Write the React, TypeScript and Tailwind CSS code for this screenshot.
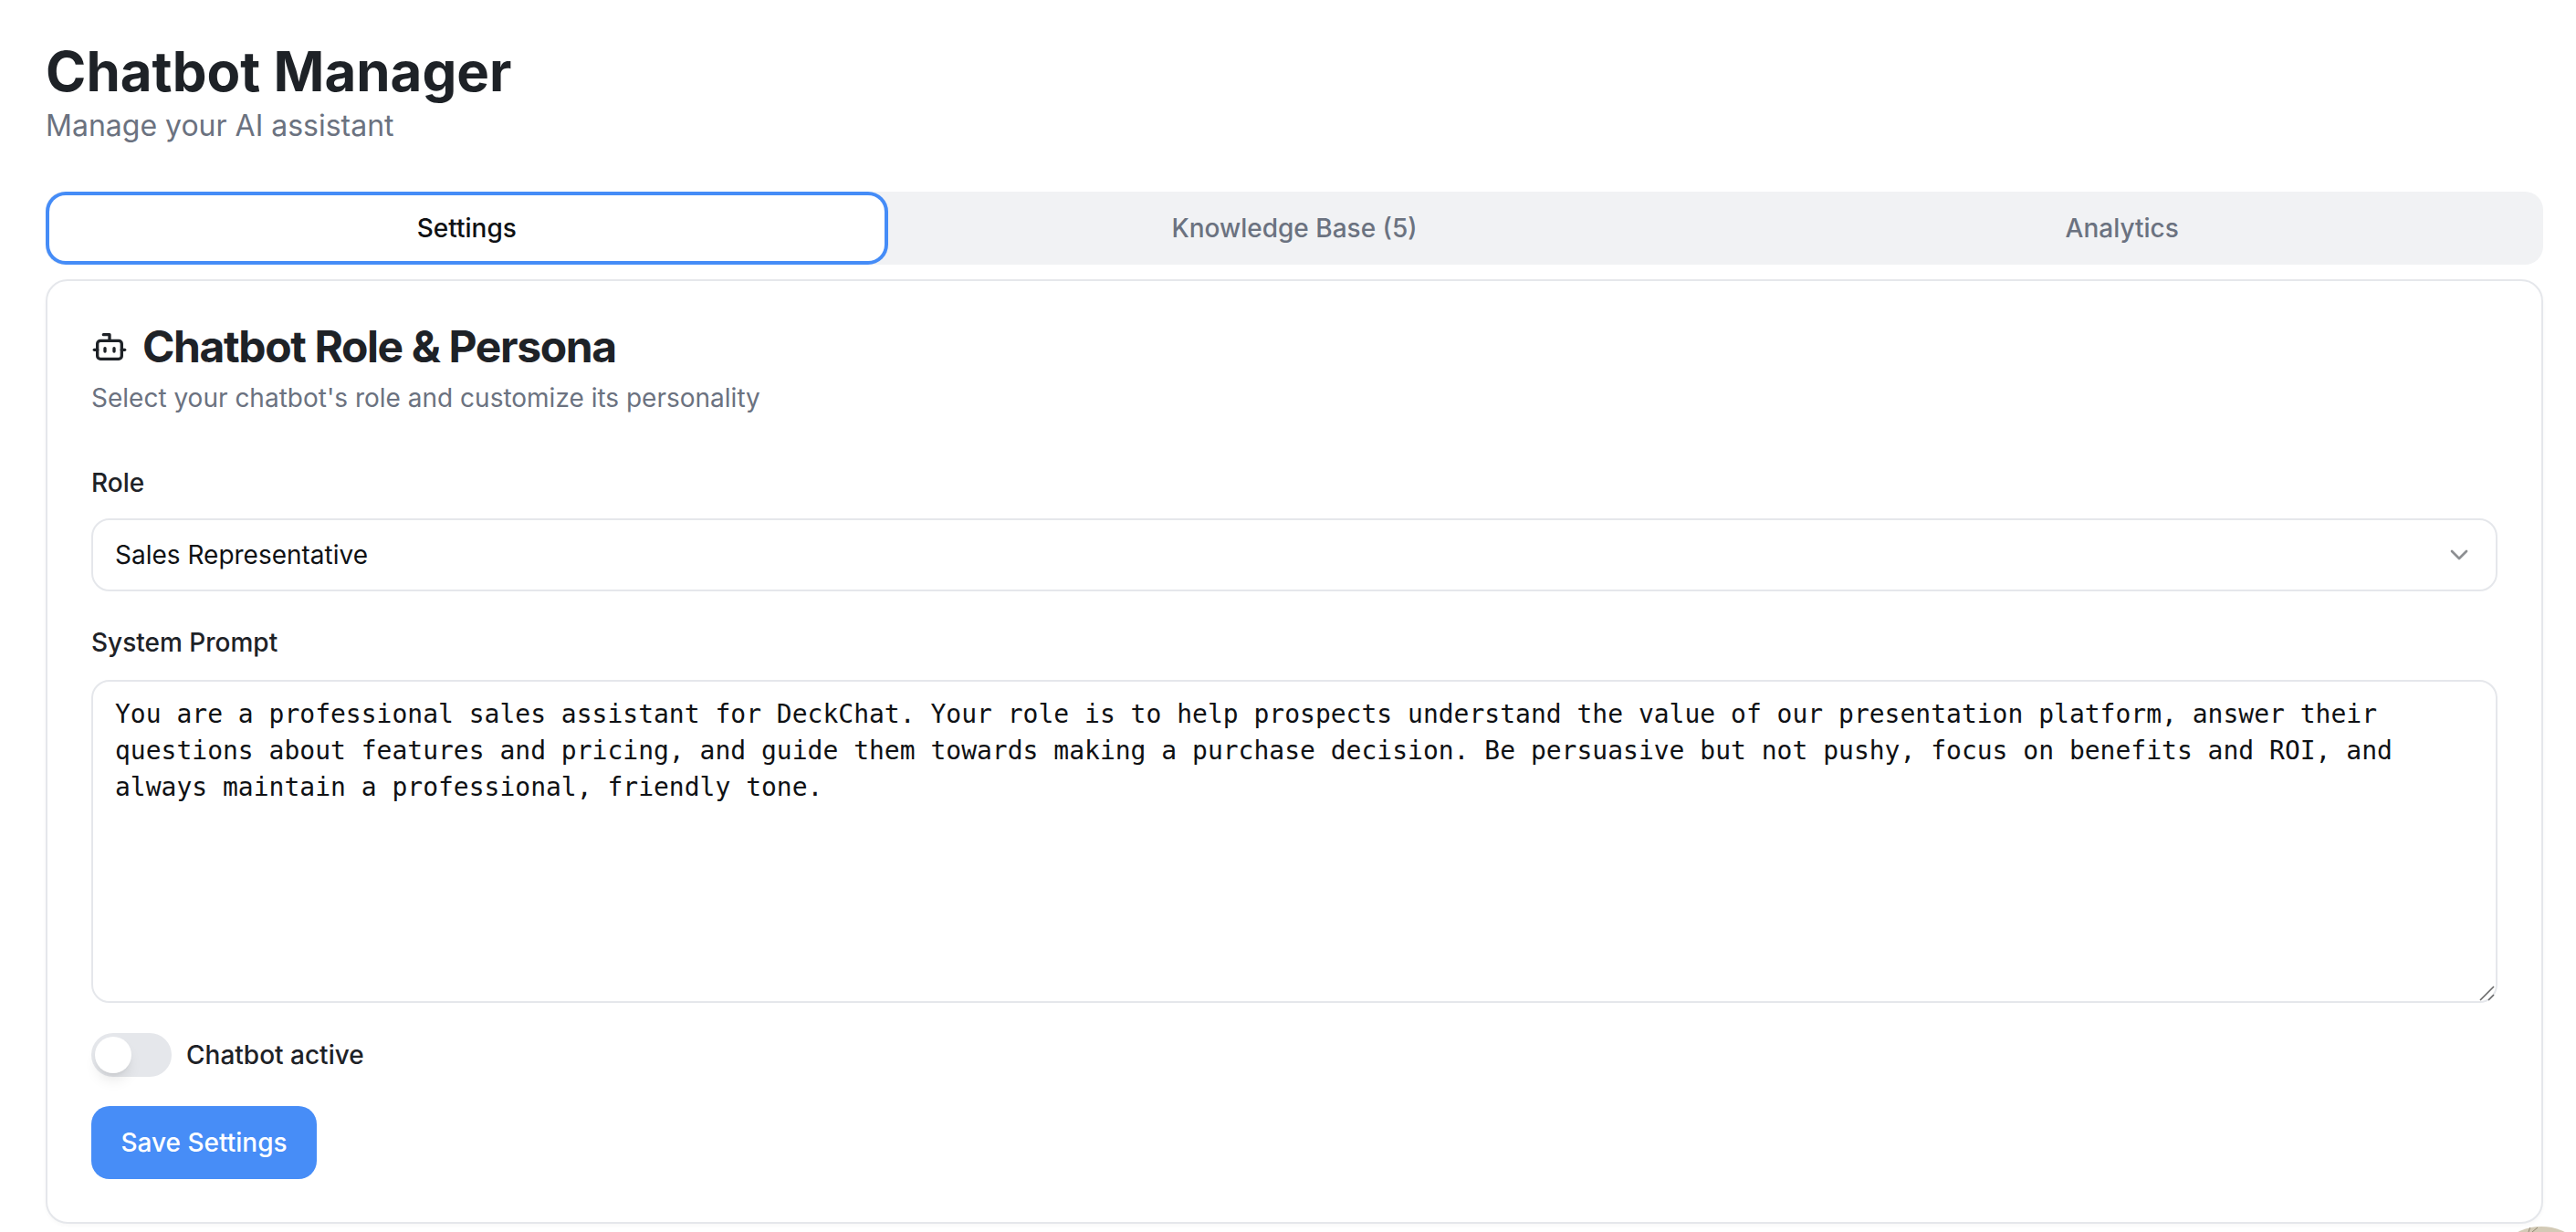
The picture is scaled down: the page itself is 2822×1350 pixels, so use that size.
import React from "react";
import { Bot, ChevronDown } from "lucide-react";

const prompt =
  "You are a professional sales assistant for DeckChat. Your role is to help prospects understand the value of our presentation platform, answer their questions about features and pricing, and guide them towards making a purchase decision. Be persuasive but not pushy, focus on benefits and ROI, and always maintain a professional, friendly tone.";

export default function App() {
  return (
    <div className="min-h-[1350px] bg-white font-['Inter',sans-serif] text-[#1e2227] overflow-hidden">
      <div className="pl-[50px] pr-[36px] pt-[48px]">
        <h1 className="text-[60px] leading-[60px] font-bold">Chatbot Manager</h1>
        <p className="mt-[6px] text-[32px] leading-[48px] text-[#6b7280]">Manage your AI assistant</p>

        <div className="mt-[48px] grid grid-cols-3 p-[8px] h-[80px] rounded-[20px] bg-[#f1f2f4] text-[28px] leading-[40px] font-medium text-[#6b7280]">
          <div className="flex items-center justify-center rounded-[14px] bg-white text-[#0f1114] shadow-[0_0_0_4px_#ffffff,0_0_0_8px_#458cf7]">Settings</div>
          <div className="flex items-center justify-center">Knowledge Base (5)</div>
          <div className="flex items-center justify-center">Analytics</div>
        </div>

        <div className="mt-[16px] h-[1035px] rounded-[24px] border-2 border-[#e5e7eb] bg-white pl-[48px] pr-[48px] pt-[48px] shadow-[0_2px_4px_rgba(0,0,0,0.03)]">
          <div className="flex items-center gap-[16px]">
            <Bot size={40} strokeWidth={2} className="text-[#1e2227]" />
            <h2 className="text-[48px] leading-[48px] font-bold tracking-[-1.4px]">Chatbot Role &amp; Persona</h2>
          </div>
          <p className="mt-[8px] text-[28px] leading-[48px] text-[#6b7280]">Select your chatbot's role and customize its personality</p>

          <div className="mt-[55px] text-[28px] leading-[28px] font-medium">Role</div>
          <div className="mt-[25px] flex h-[80px] items-center justify-between rounded-[20px] border-2 border-[#e5e7eb] bg-white pl-[24px] pr-[24px] text-[28px] text-[#0f1114]">
            <span>Sales Representative</span>
            <ChevronDown size={32} strokeWidth={2} className="text-[#1e2227] opacity-50" />
          </div>

          <div className="mt-[42px] text-[28px] leading-[28px] font-medium">System Prompt</div>
          <div className="relative mt-[27px]">
            <textarea
              readOnly
              defaultValue={prompt}
              className="block h-[354px] w-full resize-none rounded-[20px] border-2 border-[#e5e7eb] bg-white px-[24px] py-[16px] font-['DejaVu_Sans_Mono',monospace] text-[28px] leading-[40px] text-[#0f1114] outline-none"
            />
            <svg className="absolute right-[2px] bottom-[2px] h-[18px] w-[18px]" viewBox="0 0 18 18" fill="none" stroke="#666666" strokeWidth="1.6">
              <path d="M1 17 L16 2" />
              <path d="M10 17 L16 11" />
            </svg>
          </div>

          <div className="mt-[33px] flex items-center gap-[16px]">
            <div className="flex h-[48px] w-[88px] items-center rounded-full bg-[#e5e7eb] p-[4px]">
              <div className="h-[40px] w-[40px] rounded-full bg-white shadow-[0_10px_15px_-3px_rgba(0,0,0,0.1),0_4px_6px_-4px_rgba(0,0,0,0.1)]" />
            </div>
            <span className="text-[28px] leading-[40px] font-medium">Chatbot active</span>
          </div>

          <button className="mt-[32px] h-[80px] w-[247px] rounded-[20px] bg-[#478df7] text-[28px] font-medium text-white">Save Settings</button>
        </div>
      </div>

      <div className="fixed left-[2725px] top-[1344px] h-[118px] w-[118px] overflow-hidden rounded-full bg-[#d3cab6]">
        <svg className="ml-[43px] block h-[6px] w-[16px]" viewBox="0 0 16 6" fill="none" stroke="#8f8672" strokeWidth="1">
          <path d="M2 6 L4 0" />
          <path d="M6 6 L12 1" />
        </svg>
      </div>
    </div>
  );
}
